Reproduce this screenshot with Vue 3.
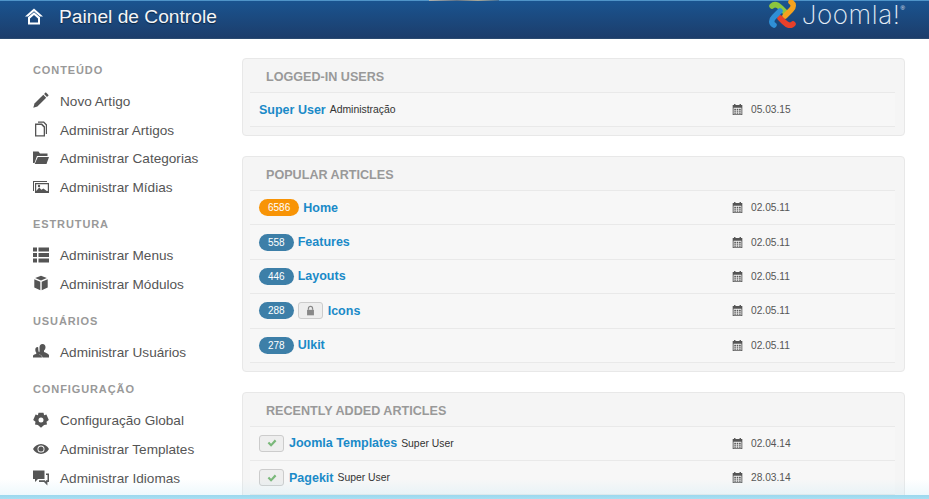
<template>
  <div class="page">
    <header class="topbar">
      <div class="title">
        <svg class="home" viewBox="0 0 18 17"><path d="M9 .6 0 8.400h3L9 3.300l6 5.100h3z" /><path fill-rule="evenodd" d="M3 9.200 9 4.200l6 5V16.500H3zM5 10.500v4h8v-4L9 7z" /></svg>
        <span>Painel de Controle</span>
      </div>
      <div class="logo">
        <svg class="logo-mark" viewBox="0 0 28 28" fill="none" stroke-width="5.500" stroke-linecap="round">
          <path d="M3 6c3-3 6-1 9 2l4 4" stroke="#8cc63f" />
          <path d="M22 2c3 2 3 5 0 8l-6 6" stroke="#f4a21f" />
          <path d="M24 24c-3 3-6 1-9-2l-4-4" stroke="#e8402a" />
          <path d="M5 25c-3-2-3-5 0-8l6-6" stroke="#2f8fd6" />
        </svg>
        <span class="logo-text">Joomla!</span><sup class="reg">®</sup>
      </div>
    </header>
    <div class="top-scrap"></div>

    <div class="content">
      <aside class="side">
        <section v-for="group in menu" :key="group.name" class="group">
          <h5>{{ group.name }}</h5>
          <ul>
            <li v-for="item in group.items" :key="item.label">
              <svg viewBox="0 0 16 16" class="ic" v-html="icons[item.icon]"></svg>
              <span>{{ item.label }}</span>
            </li>
          </ul>
        </section>
      </aside>

      <main class="main">
        <section class="well">
          <h4>LOGGED-IN USERS</h4>
          <div class="row">
            <div class="row-title"><a>Super User</a> <small>Administração</small></div>
            <div class="row-date"><svg viewBox="0 0 16 16" class="cal" v-html="icons.cal"></svg>05.03.15</div>
          </div>
        </section>

        <section class="well">
          <h4>POPULAR ARTICLES</h4>
          <div v-for="a in popular" :key="a.title" class="row">
            <div class="row-title">
              <span class="badge" :class="{ hot: a.hot }">{{ a.hits }}</span>
              <span v-if="a.locked" class="btn-mini">
                <svg viewBox="0 0 16 16" class="lock"><path d="M3 7h10v8H3z" /><path d="M5 7V5a3 3 0 0 1 6 0v2" fill="none" stroke="#888" stroke-width="1.800" /></svg>
              </span>
              <a>{{ a.title }}</a>
            </div>
            <div class="row-date"><svg viewBox="0 0 16 16" class="cal" v-html="icons.cal"></svg>{{ a.date }}</div>
          </div>
        </section>

        <section class="well">
          <h4>RECENTLY ADDED ARTICLES</h4>
          <div v-for="a in recent" :key="a.title" class="row">
            <div class="row-title">
              <span class="btn-mini">
                <svg viewBox="0 0 16 16" class="tick"><path d="M1 8.500l2.500-2.500 3 3 6-6.500 2.500 2.500-8.500 9z" /></svg>
              </span>
              <a>{{ a.title }}</a> <small>Super User</small>
            </div>
            <div class="row-date"><svg viewBox="0 0 16 16" class="cal" v-html="icons.cal"></svg>{{ a.date }}</div>
          </div>
        </section>
      </main>
    </div>

    <div class="bottom-fade"></div>
  </div>
</template>

<script setup>
const icons = {
  pencil: '<path d="M12.800.3l2.900 2.900-1.700 1.700-2.900-2.900z"/><path d="M10.300 2.800l2.900 2.900-8.800 8.800L.3 15.700l1.200-4.100z"/>',
  copy: '<path d="M5 .5h6l3 3V13h-1.200V4.300L10.400 1.800H5z"/><path fill-rule="evenodd" d="M2 2.500h7l3 3V15.500H2zM3.300 3.900v10.300h7.400V6.400L8.300 3.900z"/>',
  folder: '<path d="M0 1.500h5.500l1.500 2h7.500V6H4L1.500 13H0z"/><path d="M4.800 7H16l-2.500 7H1.700z"/>',
  image: '<path fill-rule="evenodd" d="M0 2h14v1H1v9H0zM2 4h14v10H2zM3.200 5.200v6.800l3-3.500 2.200 2.300 2-1.400 3.400 2.600h1V5.200z"/><circle cx="6" cy="7" r="1.200"/>',
  list: '<path d="M0 .5h4v4H0zM5.500 .5H16v4H5.500zM0 6h4v4H0zM5.500 6H16v4H5.500zM0 11.500h4v4H0zM5.500 11.500H16v4H5.500z"/>',
  cube: '<path d="M8 .8l5.800 2.300L8 5.400 2.200 3.100z"/><path d="M1.300 4.300l6 2.400v8.500l-6-2.700zM14.700 4.300l-6 2.400v8.500l6-2.700z"/>',
  users: '<path d="M9.500 1c2 0 3 1.500 3 3.300 0 1.400-.7 2.600-1.500 3.300v1.500c1.800.7 4 1.500 5 3v2.400H9.500c-.2-1.700-1.800-2.500-3.500-3.200V9.500C6.800 8.700 6.500 7 6.500 4.500 6.500 2.500 7.500 1 9.500 1z"/><path d="M4.500 4c1 0 .8 1 .8 2 0 1.500.4 3 1 3.600v1.800c1.600.7 2.700 1.400 2.700 3.100H0v-1.700c.5-1 2-1.500 3.300-2V9.700C2.500 9 2.300 7.800 2.300 6.500 2.300 5 3.200 4 4.500 4z"/>',
  cog: '<path fill-rule="evenodd" d="M5.500.8h5l.6 2.400 2.300-.6L15.800 8l-2.300 1.800.5 2.800-2.900.5L8 15.800l-3.100-2.700-2.900-.5.500-2.800L.2 8l2.400-5.400 2.300.6zM8 5.500a2.500 2.500 0 1 0 0 5 2.500 2.500 0 0 0 0-5z"/>',
  eye: '<path fill-rule="evenodd" d="M8 3c3.500 0 6.500 2.300 8 5-1.500 2.700-4.500 5-8 5s-6.500-2.300-8-5c1.500-2.700 4.500-5 8-5zm0 1.500a3.500 3.500 0 1 0 0 7 3.500 3.500 0 0 0 0-7z"/><circle cx="8" cy="8" r="2.600"/>',
  chat: '<path d="M0 .5h11.500v8.500H5l-3 3V9H0z"/><path d="M13 3.500H16V12h-1.600v3.500l-3.400-3.500H6v-1.700h5.800l1.200 1.200V10.200h1.500V5h-1.500z"/>',
  cal: '<path fill-rule="evenodd" d="M3 0h2v1.500h6V0h2v1.500h2V16H1V1.500h2zM2.300 5.500v9.300h11.400V5.500z"/><path d="M3.300 6.800h2.400v1.800H3.300zM6.800 6.800h2.400v1.800H6.800zM10.300 6.800h2.400v1.800h-2.400zM3.300 9.600h2.400v1.800H3.300zM6.800 9.600h2.400v1.800H6.800zM10.300 9.600h2.400v1.800h-2.400zM3.300 12.300h2.400v1.800H3.300zM6.800 12.300h2.400v1.800H6.800zM10.300 12.300h2.400v1.800h-2.400z"/>'
}

const menu = [
  { name: 'CONTEÚDO', items: [
    { label: 'Novo Artigo', icon: 'pencil' },
    { label: 'Administrar Artigos', icon: 'copy' },
    { label: 'Administrar Categorias', icon: 'folder' },
    { label: 'Administrar Mídias', icon: 'image' }
  ] },
  { name: 'ESTRUTURA', items: [
    { label: 'Administrar Menus', icon: 'list' },
    { label: 'Administrar Módulos', icon: 'cube' }
  ] },
  { name: 'USUÁRIOS', items: [
    { label: 'Administrar Usuários', icon: 'users' }
  ] },
  { name: 'CONFIGURAÇÃO', items: [
    { label: 'Configuração Global', icon: 'cog' },
    { label: 'Administrar Templates', icon: 'eye' },
    { label: 'Administrar Idiomas', icon: 'chat' }
  ] }
]

const popular = [
  { hits: 6586, title: 'Home', date: '02.05.11', hot: true },
  { hits: 558, title: 'Features', date: '02.05.11' },
  { hits: 446, title: 'Layouts', date: '02.05.11' },
  { hits: 288, title: 'Icons', date: '02.05.11', locked: true },
  { hits: 278, title: 'UIkit', date: '02.05.11' }
]

const recent = [
  { title: 'Joomla Templates', date: '02.04.14' },
  { title: 'Pagekit', date: '28.03.14' }
]
</script>

<style>
html, body { margin: 0; background: #fff; overflow: hidden; }
</style>

<style scoped>
.page { position: relative; width: 929px; height: 499px; overflow: hidden; background: #fff; font-family: "Liberation Sans", Arial, sans-serif; color: #555; }

.topbar { height: 37px; border-top: 1px solid #4f94c8; border-bottom: 1px solid #2a4a70; display: flex; align-items: center; justify-content: space-between; background: linear-gradient(to bottom, #1a5490, #1c3d6b); }
.title { display: flex; align-items: center; gap: 16px; padding: 0 0 6px 25px; color: #f4f6f8; font-size: 19.200px; text-shadow: 0 1px 1px rgba(0,0,0,.5); }
.home { width: 18px; height: 17px; fill: #fff; }
.logo { display: flex; align-items: flex-start; padding-right: 24px; height: 37px; color: #e4edf6; }
.logo-mark { width: 28px; height: 28px; margin-top: -1px; margin-right: 5px; }
.logo-text { font-family: Inter, Lato, sans-serif; font-weight: 200; font-size: 26px; letter-spacing: .6px; line-height: 28px; margin-top: 0; }
.reg { font-size: 6px; line-height: 8px; margin-top: 3px; }
.top-scrap { position: absolute; top: 0; left: 429px; width: 70px; height: 1px; background: linear-gradient(to right, #b0b4b0, #5a7088 40%, #a8a898 70%, #3a6a96); }

.content { display: flex; }
.side { width: 242px; flex: none; box-sizing: border-box; padding: 23px 0 0 33px; }
.group { margin-bottom: 14px; }
.group:last-child h5 { margin-bottom: 10px; }
h5 { margin: 0 0 9px; font-size: 11px; letter-spacing: .9px; line-height: 16px; font-weight: bold; color: #999; }
ul { margin: 0; padding: 0; list-style: none; }
li { display: flex; align-items: center; height: 28.800px; font-size: 13.600px; color: #555; }
.ic { width: 16px; height: 16px; fill: #555; margin: -2px 11px 0 0; flex: none; }

.main { width: 663px; flex: none; padding-top: 19px; }
.well { background: #f5f5f5; border: 1px solid #e8e8e8; border-radius: 4px; padding: 0 9px 8.100px 7px; margin-bottom: 19.500px; }
h4 { margin: 0; height: 33px; line-height: 36px; padding-left: 16px; font-size: 12.600px; font-weight: bold; color: #999; border-bottom: 1px solid #e9e9e9; }
.row { display: flex; align-items: center; height: 33.400px; border-bottom: 1px solid #e9e9e9; background: #f7f7f7; font-size: 12px; }
.row-title { width: 482px; flex: none; padding-left: 9px; box-sizing: border-box; display: flex; align-items: center; gap: 4px; }
.row-title a { color: #1a8ac8; font-weight: bold; font-size: 12.500px; }
.row-title small { font-size: 10.400px; color: #333; }
.row-date { display: flex; align-items: center; font-size: 10.200px; color: #555; }
.cal { width: 11px; height: 11px; fill: #555; margin-right: 8px; }
.badge { background: #3d7fa8; color: #fff; font-size: 10px; line-height: 17px; height: 17px; padding: 0 9px; border-radius: 9px; }
.badge.hot { background: #f89406; }
.btn-mini { display: inline-flex; align-items: center; justify-content: center; width: 25px; height: 17px; box-sizing: border-box; border: 1px solid #ccc; border-radius: 3px; background: #eee; margin-right: 1px; }
.lock { width: 11px; height: 11px; fill: #888; }
.tick { width: 10px; height: 10px; fill: #7ab87a; }

.bottom-fade { position: absolute; left: 0; right: 0; bottom: 0; height: 20px; background: linear-gradient(to bottom, rgba(255,255,255,0) 0, rgba(190,230,245,.25) 78%, #9bd8ee 80%, #a9dff2 100%); pointer-events: none; }
</style>
